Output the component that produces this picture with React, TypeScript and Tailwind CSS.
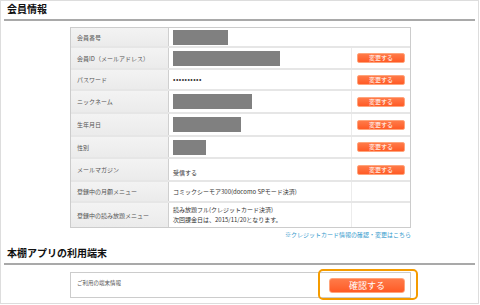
import React from "react";

const jp = { fontFamily: '"Noto Sans CJK JP", "Noto Sans", sans-serif' };

type Row = {
  label: string;
  h: string;
  block?: string;
  text?: React.ReactNode;
  button?: boolean;
  first?: boolean;
  last?: boolean;
};

const rows: Row[] = [
  { label: "会員番号", h: "h-[20px]", block: "w-[55px]", first: true },
  { label: "会員ID（メールアドレス）", h: "h-[22px]", block: "w-[107px]", button: true },
  { label: "パスワード", h: "h-[21px]", text: <span className="text-[7px] tracking-[0.5px] text-[#333]">••••••••••</span>, button: true },
  { label: "ニックネーム", h: "h-[23px]", block: "w-[79px]", button: true },
  { label: "生年月日", h: "h-[23px]", block: "w-[68px]", button: true },
  { label: "性別", h: "h-[22px]", block: "w-[33px]", button: true },
  { label: "メールマガジン", h: "h-[23px]", text: <span className="mt-[5px]">受信する</span>, button: true },
  { label: "登録中の月額メニュー", h: "h-[21px]", text: "コミックシーモア300(docomo SPモード決済)" },
  {
    label: "登録中の読み放題メニュー",
    h: "h-[24px]",
    text: (
      <span className="flex flex-col leading-[10px]">
        <span>読み放題フル(クレジットカード決済)</span>
        <span>次回課金日は、2015/11/20となります。</span>
      </span>
    ),
    last: true,
  },
];

function SmallButton() {
  return (
    <div className="w-[48px] h-[10px] rounded-[2px] border border-[#ffa47c] bg-gradient-to-b from-[#ff7a48] to-[#ff5a24] flex items-center justify-center">
      <span className="text-[6px] leading-[6px] text-white">変更する</span>
    </div>
  );
}

export default function App() {
  return (
    <div className="w-[480px] h-[305px] bg-white relative overflow-hidden" style={jp}>
      <div className="w-[479px] h-[304px] border border-[#dddddd] flex flex-col">
        {/* 会員情報 */}
        <div className="h-[18px] pl-[6px] pt-[2px]">
          <h2 className="text-[10px] leading-[12px] font-bold text-[#111]">会員情報</h2>
        </div>
        <div className="mx-[3px] h-[2px] bg-[#a9a9a9]" />

        <div className="ml-[69px] mt-[6px] w-[341px]">
          <div className="border border-[#cccccc]">
            {rows.map((r) => (
              <div key={r.label} className={`flex ${r.h} ${r.last ? "" : "border-b-2 border-[#e6e6e6]"}`}>
                <div className="w-[97px] bg-gradient-to-b from-[#f3f3f3] to-[#ebebeb] flex items-center pl-[6px] text-[6px] text-[#555]">
                  {r.label}
                </div>
                <div className="w-[183px] border-l border-[#cfcfcf] flex items-center pl-[4px] text-[6px] text-[#333]">
                  {r.block && <div className={`${r.block} h-[15px] bg-[#808080]`} />}
                  {r.text}
                </div>
                <div className={`flex-1 flex items-center pl-[5px] ${r.first ? "" : "border-l border-[#ececec]"}`}>
                  {r.button && <SmallButton />}
                </div>
              </div>
            ))}
          </div>
          <div className="mt-[3px] text-right text-[6px] leading-[8px] text-[#3399cc]">
            ※クレジットカード情報の確認・変更はこちら
          </div>
        </div>

        {/* 本棚アプリの利用端末 */}
        <div className="h-[16px] mt-[8px] pl-[6px]">
          <h2 className="text-[10px] leading-[12px] font-bold text-[#111]">本棚アプリの利用端末</h2>
        </div>
        <div className="mx-[3px] h-[2px] bg-[#a9a9a9]" />

        <div className="ml-[69px] mt-[7px] w-[341px] h-[26px] border border-[#cccccc] flex items-start justify-between pl-[6px] pr-[5px]">
          <span className="mt-[7px] text-[5.5px] leading-[6px] text-[#555]">ご利用の端末情報</span>
          <div className="mt-[5px] w-[76px] h-[15px] rounded-[3px] border border-[#ffa47c] bg-gradient-to-b from-[#ff7a48] to-[#ff5a24] flex items-center justify-center">
            <span className="text-[9px] leading-[10px] text-white">確認する</span>
          </div>
        </div>
      </div>

      {/* highlight ring */}
      <div className="absolute left-[318px] top-[269px] w-[100px] h-[31px] border-2 border-[#f59c00] rounded-[5px]" />
    </div>
  );
}
